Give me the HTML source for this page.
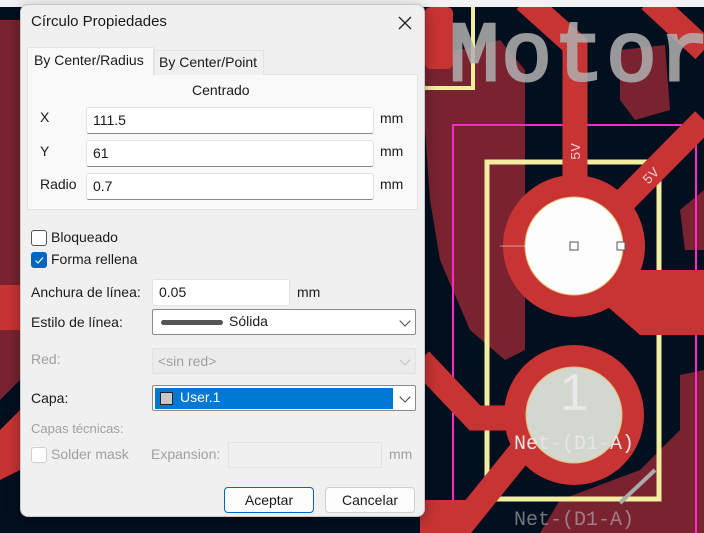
<!DOCTYPE html>
<html><head><meta charset="utf-8"><style>
*{box-sizing:border-box;margin:0;padding:0}
body{width:704px;height:533px;overflow:hidden;position:relative;background:#020f1f;font-family:"Segoe UI","Liberation Sans",sans-serif;font-size:14px;color:#1a1a1a}
.abs{position:absolute}
.dlg{position:absolute;left:20px;top:4px;width:405px;height:513px;background:#f0f0f0;border-radius:8px;border:1px solid #c8c8c8;box-shadow:0 4px 14px rgba(0,0,0,.35);overflow:hidden}
.inp{position:absolute;background:#fff;border:1px solid #e2e2e2;border-bottom:1px solid #8a8a8a;border-radius:3px;padding-left:6px;line-height:24px;font-size:14px}
.lbl{position:absolute;font-size:14px;white-space:nowrap}
.sel{position:absolute;background:#fff;border:1px solid #8a8a8a;border-radius:2px}
.chev{position:absolute;right:6px;top:7px;width:8px;height:8px;border-right:1.3px solid #444;border-bottom:1.3px solid #444;transform:rotate(45deg)}
.cb{position:absolute;width:16px;height:16px;border:1px solid #555;border-radius:3px;background:#fff}
.btn{position:absolute;height:26px;width:90px;background:#fdfdfd;border:1px solid #cfcfcf;border-radius:4px;text-align:center;line-height:24px;font-size:14px}
.dis{color:#a0a0a0}
</style></head><body>
<svg class="abs" style="left:0;top:0" width="704" height="533" viewBox="0 0 704 533">
<rect width="704" height="533" fill="#020f1f"/>
<g fill="#7a2330">
<path d="M420 60 L500 40 L525 70 L525 350 L505 360 L470 330 L440 260 L430 200 Z"/>
<path d="M620 50 L665 45 L670 110 L635 120 L620 100 Z"/>
<path d="M680 210 L704 190 L704 250 L685 250 Z"/>
<path d="M680 375 L704 370 L704 533 L540 533 L560 500 L640 470 L680 430 Z"/>
<path d="M0 20 L20 20 L20 380 L0 400 Z"/>
</g>
<rect x="453" y="125" width="243" height="420" fill="none" stroke="#ff28c8" stroke-width="2"/>
<rect x="487" y="162" width="172" height="337" fill="none" stroke="#f2eea0" stroke-width="5"/>
<path d="M420 88 L473 88 L473 0" fill="none" stroke="#f2eea0" stroke-width="4"/>
<rect x="425" y="7" width="28" height="62" rx="6" fill="#c83434"/>
<g stroke="#c83434" stroke-width="25" fill="none" stroke-linecap="butt">
<path d="M525 0 L575 45 L575 200"/>
<path d="M610 215 L704 120"/>
<path d="M650 0 L704 50"/>
<path d="M420 360 L475 418 L540 418"/>
<path d="M530 440 L455 533"/>
</g>
<path d="M600 270 L704 270 L704 335 L640 335 L600 300 Z" fill="#c83434"/>
<path d="M420 500 L480 500 L470 533 L420 533 Z" fill="#c83434"/>
<text x="449" y="80" font-family="Liberation Mono,monospace" font-size="84" fill="#b0b0b0" stroke="#b0b0b0" stroke-width="3" opacity=".85" letter-spacing="2">Motor</text>
<circle cx="574" cy="246" r="71" fill="#c83434"/>
<circle cx="574" cy="246" r="49" fill="#fdfdfd" stroke="#e8c070" stroke-width="1"/>
<circle cx="574" cy="415" r="70" fill="#c83434"/>
<circle cx="574" cy="415" r="48" fill="#d4d6d0" stroke="#e8c070" stroke-width="1"/>
<text x="574" y="410" text-anchor="middle" font-family="Liberation Sans,sans-serif" font-size="52" fill="#eeeeee" opacity=".8">1</text>
<text x="574" y="449" text-anchor="middle" font-family="Liberation Mono,monospace" font-size="20" fill="#e6e6e6">Net-(D1-A)</text>
<text x="574" y="525" text-anchor="middle" font-family="Liberation Mono,monospace" font-size="20" fill="#bbb" opacity=".6">Net-(D1-A)</text>
<text transform="translate(580,160) rotate(-90)" font-family="Liberation Mono,monospace" font-size="14" fill="#f0c8c8">5V</text>
<text transform="translate(648,185) rotate(-45)" font-family="Liberation Mono,monospace" font-size="14" fill="#f0c8c8">5V</text>
<line x1="500" y1="246" x2="574" y2="246" stroke="#fff" stroke-width=".6"/>
<rect x="570" y="242" width="8" height="8" fill="#fff" stroke="#555"/>
<rect x="617" y="242" width="8" height="8" fill="#fff" stroke="#555"/>
<line x1="620" y1="503" x2="655" y2="470" stroke="#aaa" stroke-width="4"/>
<path d="M0 285 L20 285 L20 330 L0 330 Z" fill="#c83434"/>
<path d="M0 430 L20 410 L20 470 L0 480 Z" fill="#c83434"/>
<rect x="0" y="0" width="704" height="7" fill="#f2f2f2"/>
</svg>

<div class="dlg">
 <div class="lbl" style="left:10px;top:8px;font-size:15px">Círculo Propiedades</div>
 <svg class="abs" style="left:377px;top:11px" width="14" height="14"><path d="M1 1L13 13M13 1L1 13" stroke="#222" stroke-width="1.3"/></svg>
 <div class="abs" style="left:6px;top:69px;width:391px;height:136px;background:#f9f9f9;border:1px solid #e3e3e3"></div>
 <div class="abs" style="left:133px;top:45px;width:110px;height:25px;background:#f0f0f0;border:1px solid #e3e3e3;border-bottom:none"></div>
 <div class="abs" style="left:6px;top:42px;width:127px;height:29px;background:#f9f9f9;border:1px solid #e3e3e3;border-bottom:none"></div>
 <div class="lbl" style="left:13px;top:47px">By Center/Radius</div>
 <div class="lbl" style="left:138px;top:49px">By Center/Point</div>
 <div class="lbl" style="left:171px;top:77px">Centrado</div>
 <div class="lbl" style="left:19px;top:104px">X</div>
 <div class="lbl" style="left:19px;top:138px">Y</div>
 <div class="lbl" style="left:19px;top:171px">Radio</div>
 <div class="inp" style="left:65px;top:102px;width:288px;height:27px">111.5</div>
 <div class="inp" style="left:65px;top:135px;width:288px;height:27px">61</div>
 <div class="inp" style="left:65px;top:168px;width:288px;height:27px">0.7</div>
 <div class="lbl" style="left:359px;top:105px">mm</div>
 <div class="lbl" style="left:359px;top:138px">mm</div>
 <div class="lbl" style="left:359px;top:171px">mm</div>
 <div class="cb" style="left:10px;top:225px"></div>
 <div class="lbl" style="left:30px;top:224px">Bloqueado</div>
 <div class="cb" style="left:10px;top:247px;background:#0067c0;border-color:#0067c0"><svg width="14" height="14" style="position:absolute;left:0;top:0"><path d="M3.5 7.5L6 10L11 4.5" stroke="#fff" stroke-width="1.2" fill="none"/></svg></div>
 <div class="lbl" style="left:30px;top:246px">Forma rellena</div>
 <div class="lbl" style="left:10px;top:279px">Anchura de línea:</div>
 <div class="inp" style="left:131px;top:274px;width:138px;height:27px;border-bottom-color:#e2e2e2">0.05</div>
 <div class="lbl" style="left:276px;top:279px">mm</div>
 <div class="lbl" style="left:10px;top:309px">Estilo de línea:</div>
 <div class="sel" style="left:131px;top:304px;width:264px;height:26px"><div class="abs" style="left:8px;top:10px;width:62px;height:5px;border-radius:3px;background:#555"></div><div class="lbl" style="left:76px;top:3px">Sólida</div><div class="chev"></div></div>
 <div class="lbl dis" style="left:10px;top:346px">Red:</div>
 <div class="sel" style="left:131px;top:343px;width:264px;height:26px;background:#ebebeb;border-color:#e2e2e2"><div class="lbl dis" style="left:5px;top:4px">&lt;sin red&gt;</div><div class="chev" style="border-color:#c0c0c0"></div></div>
 <div class="lbl" style="left:10px;top:385px">Capa:</div>
 <div class="sel" style="left:131px;top:380px;width:264px;height:26px"><div class="abs" style="left:2px;top:2px;width:238px;height:21px;background:#0078d4"></div><div class="abs" style="left:7px;top:6px;width:13px;height:13px;background:#c8c8c8;border:1px solid #222"></div><div class="lbl" style="left:27px;top:3px;color:#fff">User.1</div><div class="chev"></div></div>
 <div class="lbl dis" style="left:10px;top:416px;font-size:13px">Capas técnicas:</div>
 <div class="cb" style="left:10px;top:442px;border-color:#cfcfcf"></div>
 <div class="lbl dis" style="left:30px;top:441px">Solder mask</div>
 <div class="lbl dis" style="left:130px;top:441px">Expansion:</div>
 <div class="abs" style="left:207px;top:437px;width:154px;height:26px;border:1px solid #e2e2e2;background:#f0f0f0"></div>
 <div class="lbl dis" style="left:368px;top:441px">mm</div>
 <div class="btn" style="left:203px;top:482px;border:1px solid #0067c0">Aceptar</div>
 <div class="btn" style="left:304px;top:482px">Cancelar</div>
</div>
</body></html>
